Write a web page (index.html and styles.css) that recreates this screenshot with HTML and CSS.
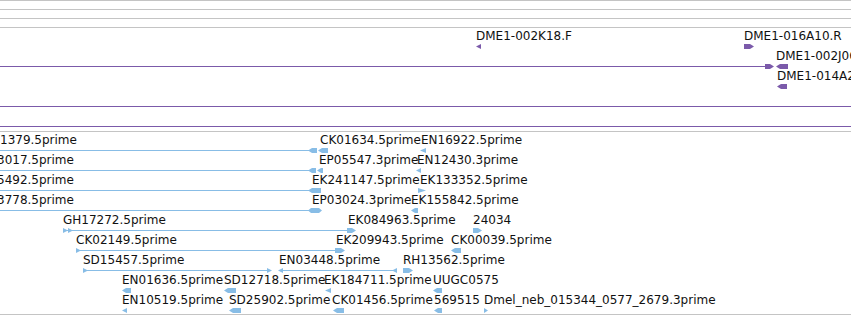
FILE: index.html
```html
<!DOCTYPE html>
<html lang="en">
<head>
    <meta charset="UTF-8">
    <meta name="viewport" content="width=device-width, initial-scale=1.0">
    <title>Track view</title>
    <link rel="stylesheet" href="styles.css">
</head>
<body>

    <div class="tracks">
        <div class="lane"></div>
        <div class="lane"></div>
        <div class="lane"></div>
        <div class="track track-bac" id="bac-track"></div>
        <div class="track track-est" id="est-track"></div>
    </div>

    <script>
        const NS = 'http://www.w3.org/2000/svg';

        // t = label, l = line, L/R = block pointing left/right,
        // < / > = small arrowhead, H = block tapered both ends
        const bacRows = [
            [['t', 476, 'DME1-002K18.F'], ['<', 476, 481], ['t', 744, 'DME1-016A10.R'], ['R', 744, 754]],
            [['t', 776, 'DME1-002J06.F'], ['l', 0, 766], ['R', 765, 774], ['L', 776, 788]],
            [['t', 777, 'DME1-014A21.R'], ['L', 777, 787]],
            [['l', 0, 851]],
            [['l', 0, 851]]
        ];

        const estRows = [
            [['t', 0, '1379.5prime'], ['l', 0, 309], ['L', 308, 317], ['t', 320, 'CK01634.5prime'], ['L', 318, 328],
             ['t', 421, 'EN16922.5prime'], ['<', 420, 426]],
            [['t', -3, '3017.5prime'], ['l', 0, 309], ['L', 308, 316], ['t', 319, 'EP05547.3prime'], ['L', 317, 323],
             ['t', 417, 'EN12430.3prime'], ['<', 416, 421]],
            [['t', -3, '5492.5prime'], ['l', 0, 309], ['L', 308, 321], ['t', 312, 'EK241147.5prime'],
             ['t', 420, 'EK133352.5prime'], ['>', 418, 426]],
            [['t', -3, '3778.5prime'], ['l', 0, 309], ['H', 308, 322], ['t', 312, 'EP03024.3prime'],
             ['t', 411, 'EK155842.5prime'], ['L', 411, 418]],
            [['t', 63, 'GH17272.5prime'], ['>', 63, 68], ['>', 68, 73], ['l', 63, 349], ['R', 347, 356],
             ['t', 348, 'EK084963.5prime'], ['t', 473, '24034'], ['R', 473, 482]],
            [['t', 76, 'CK02149.5prime'], ['>', 76, 81], ['l', 76, 337], ['R', 335, 345],
             ['t', 336, 'EK209943.5prime'], ['t', 451, 'CK00039.5prime'], ['L', 451, 461]],
            [['t', 83, 'SD15457.5prime'], ['>', 83, 88], ['l', 83, 268], ['>', 267, 272],
             ['t', 279, 'EN03448.5prime'], ['<', 278, 283], ['l', 283, 393], ['<', 392, 397],
             ['t', 403, 'RH13562.5prime'], ['R', 403, 413]],
            [['t', 122, 'EN01636.5prime'], ['L', 122, 131], ['t', 224, 'SD12718.5prime'], ['L', 224, 236],
             ['t', 324, 'EK184711.5prime'], ['<', 325, 331], ['t', 433, 'UUGC0575'], ['L', 433, 442]],
            [['t', 122, 'EN10519.5prime'], ['<', 122, 127], ['t', 229, 'SD25902.5prime'], ['L', 229, 241],
             ['t', 332, 'CK01456.5prime'], ['L', 333, 344], ['t', 434, '569515'], ['L', 434, 442],
             ['t', 484, 'Dmel_neb_015344_0577_2679.3prime'], ['>', 484, 488]]
        ];

        function shapePoints(kind, a, b, c) {
            const top = c - 2, bot = c + 3, mid = c + 0.5;
            const tip = Math.min(4, b - a);
            switch (kind) {
                case 'l': return [[a, c], [b, c], [b, c + 1], [a, c + 1]];
                case '<': return [[a, mid], [b, top], [b, bot]];
                case '>': return [[b, mid], [a, top], [a, bot]];
                case 'L': return [[a, mid], [a + tip, top], [b, top], [b, bot], [a + tip, bot]];
                case 'R': return [[a, top], [b - tip, top], [b, mid], [b - tip, bot], [a, bot]];
                case 'H': return [[a, mid], [a + 3, top], [b - 3, top], [b, mid], [b - 3, bot], [a + 3, bot]];
            }
        }

        function drawTrack(id, rows) {
            const holder = document.getElementById(id);
            const svg = document.createElementNS(NS, 'svg');
            svg.setAttribute('width', 851);
            svg.setAttribute('height', holder.clientHeight);

            rows.forEach((row, i) => {
                const c = 18 + i * 20; // glyph centre of this row
                row.forEach(([kind, a, b]) => {
                    let el;
                    if (kind === 't') {
                        el = document.createElementNS(NS, 'text');
                        el.setAttribute('class', 'feature-label');
                        el.setAttribute('x', a);
                        el.setAttribute('y', c - 6);
                        el.textContent = b;
                    } else {
                        el = document.createElementNS(NS, 'polygon');
                        el.setAttribute('class', 'glyph');
                        el.setAttribute('points', shapePoints(kind, a, b, c).map(p => p.join(',')).join(' '));
                    }
                    svg.appendChild(el);
                });
            });

            holder.appendChild(svg);
        }

        drawTrack('bac-track', bacRows);
        drawTrack('est-track', estRows);
    </script>

</body>
</html>
```

FILE: styles.css
```css
* {
    margin: 0;
    padding: 0;
    box-sizing: border-box;
}

body {
    background: #fff;
    font-family: "DejaVu Sans", sans-serif;
    overflow: hidden;
}

.tracks {
    width: 851px;
}

/* empty tracks at the top */
.lane {
    height: 9px;
    border-top: 1px solid #c4c4c4;
}

.track {
    border-top: 1px solid #c4c4c4;
    overflow: hidden;
}

.track svg {
    display: block;
}

.track-bac {
    height: 104px;
}

.track-est {
    height: 184px;
    border-bottom: 1px solid #c4c4c4;
}

.feature-label {
    font-family: "DejaVu Sans", sans-serif;
    font-size: 12px;
    fill: #111;
}

.track-bac .glyph {
    fill: #7b5aaa;
}

.track-est .glyph {
    fill: #88bde6;
}
```
